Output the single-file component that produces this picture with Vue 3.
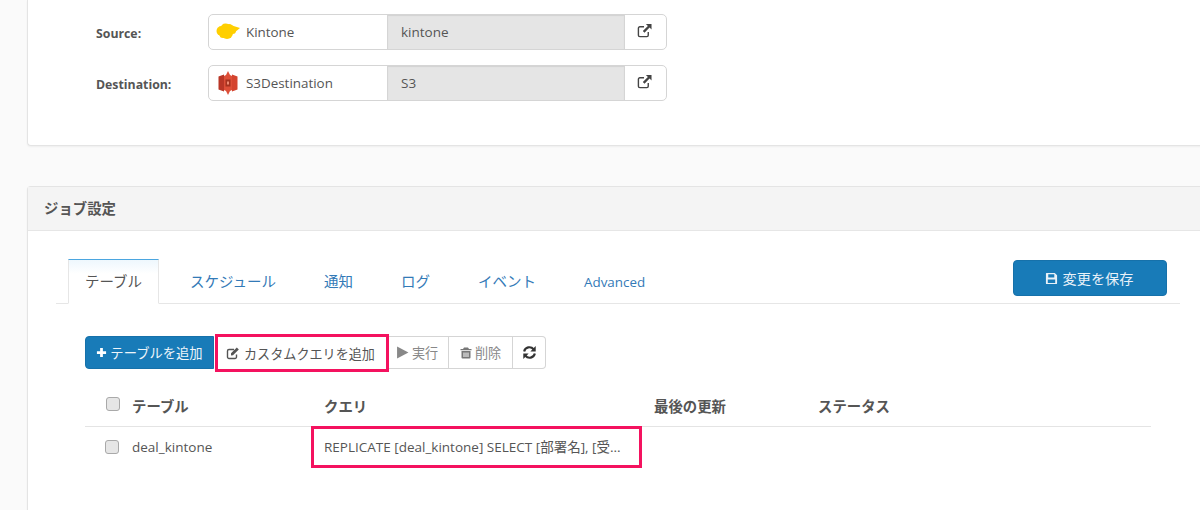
<script setup>
const connections = [
  { label: 'Source:', name: 'Kintone', type: 'kintone', icon: 'cloud' },
  { label: 'Destination:', name: 'S3Destination', type: 'S3', icon: 's3' }
]
const tabs = ['テーブル', 'スケジュール', '通知', 'ログ', 'イベント', 'Advanced']
</script>

<template>
  <div class="page">
    <section class="card card-top">
      <div v-for="c in connections" :key="c.label" class="conn-row">
        <div class="conn-label">{{ c.label }}</div>
        <div class="group">
          <div class="cell-name">
            <svg v-if="c.icon === 'cloud'" class="logo" viewBox="0 0 24 24">
              <g fill="#ffcf00">
                <circle cx="5.500" cy="11" r="5"/>
                <circle cx="9.500" cy="8.500" r="5"/>
                <circle cx="13" cy="8.500" r="4.500"/>
                <circle cx="11" cy="13" r="6"/>
                <circle cx="7" cy="14.500" r="3.500"/>
                <circle cx="16.500" cy="10.500" r="3.500"/>
                <path d="M16 5.500 24 8 18 13z"/>
              </g>
            </svg>
            <svg v-else class="logo" viewBox="0 0 24 24">
              <path fill="#b93626" d="M2.500 5.500 8 3.500v17l-5.500-2z"/>
              <path fill="#d4442f" d="M21.500 5.500 16 3.500v17l5.500-2z"/>
              <path fill="#dd4f38" d="M8 5 10 4 12 0l2 4 2 1v14l-2 1-2 4-2-4-2-1z"/>
              <path fill="#a5321f" d="M9.500 8.500h5v7h-5z"/>
              <path fill="#ee8a73" d="M11 10.500h2v3h-2z"/>
            </svg>
            <span class="name-text">{{ c.name }}</span>
          </div>
          <div class="cell-type">{{ c.type }}</div>
          <div class="cell-link">
            <svg viewBox="0 0 16 16" class="ext">
              <path fill="none" stroke="#444" stroke-width="1.500" d="M12 9.500V13a1.500 1.500 0 0 1-1.500 1.500H3A1.500 1.500 0 0 1 1.500 13V5.500A1.500 1.500 0 0 1 3 4h4.500"/>
              <path fill="#444" d="M9.500 1H15.500V7L13.400 4.900 8 10.300 6.200 8.500 11.600 3.100z"/>
            </svg>
          </div>
        </div>
      </div>
    </section>

    <section class="card card-job">
      <header class="card-head">ジョブ設定</header>
      <div class="card-body">
        <div class="tab-bar">
          <div class="tabs">
            <div v-for="(t, i) in tabs" :key="t" class="tab" :class="{ active: i === 0, latin: t === 'Advanced' }">{{ t }}</div>
          </div>
          <button class="btn-save">
            <svg viewBox="0 0 14 14" class="ic13">
              <path fill="#e8f1f8" fill-rule="evenodd" d="M1.500 1h9L13 3.500V12a1 1 0 0 1-1 1H2a1 1 0 0 1-1-1V1.500zM3.500 2.500v3.500h6.500V2.500zM3 8v3.800h8V8z"/>
            </svg>
            変更を保存
          </button>
        </div>

        <div class="toolbar">
          <button class="tb tb-primary">
            <svg viewBox="0 0 12 12" class="ic11"><path fill="#fff" d="M4.500 1h3v3.500H11v3H7.500V11h-3V7.500H1v-3h3.500z"/></svg>
            テーブルを追加
          </button>
          <button class="tb tb-custom">
            <svg viewBox="0 0 14 14" class="ic14">
              <path fill="none" stroke="#555" stroke-width="1.400" d="M10.500 8.500V11a1.500 1.500 0 0 1-1.500 1.500H3A1.500 1.500 0 0 1 1.500 11V5A1.500 1.500 0 0 1 3 3.500h5"/>
              <path fill="#555" d="M5 7.200 10.800 1.500 12.800 3.500 7 9.300 5 9.500z"/>
            </svg>
            カスタムクエリを追加
          </button>
          <button class="tb tb-muted tb-run">
            <svg viewBox="0 0 12 12" class="ic13"><path fill="#888" d="M1 0.500 11.500 6 1 11.500z"/></svg>
            実行
          </button>
          <button class="tb tb-muted tb-del">
            <svg viewBox="0 0 12 12" class="ic12"><path fill="#777" fill-rule="evenodd" d="M4 0.500h4L9 2h2.500v1.200H.5V2H3zM1.500 4h9v6.500a1 1 0 0 1-1 1h-7a1 1 0 0 1-1-1zM3.500 5.500v4.500h1V5.500zM5.500 5.500v4.500h1V5.500zM7.500 5.500v4.500h1V5.500z"/></svg>
            削除
          </button>
          <button class="tb tb-refresh">
            <svg viewBox="0 0 14 14" class="ic14">
              <path fill="none" stroke="#333" stroke-width="2" d="M2 6a5 5 0 0 1 8.800-2M12 8a5 5 0 0 1-8.800 2"/>
              <path fill="#333" d="M12.800 1v5h-5zM1.200 13V8h5z"/>
            </svg>
          </button>
        </div>

        <div class="table">
          <div class="tr th">
            <div class="col-check"><span class="checkbox"></span></div>
            <div class="col-name">テーブル</div>
            <div class="col-query">クエリ</div>
            <div class="col-updated">最後の更新</div>
            <div class="col-status">ステータス</div>
          </div>
          <div class="tr td">
            <div class="col-check"><span class="checkbox"></span></div>
            <div class="col-name">deal_kintone</div>
            <div class="col-query"><span class="query-box">REPLICATE [deal_kintone] SELECT [部署名], [受...</span></div>
          </div>
        </div>
      </div>
    </section>
  </div>
</template>

<style>
html, body { margin: 0; background: #fafafa; }
</style>

<style scoped>
.page {
  width: 1200px;
  height: 510px;
  overflow: hidden;
  background: #fafafa;
  padding-left: 27px;
  box-sizing: border-box;
  font-family: "Open Sans", "Noto Sans CJK JP", sans-serif;
  font-size: 14px;
  color: #555;
}
.card {
  width: 1200px;
  background: #fff;
  border: 1px solid #e4e4e4;
  border-right: none;
  border-radius: 4px 0 0 4px;
  box-shadow: 0 1px 2px rgba(0,0,0,.05);
  box-sizing: border-box;
}
.card-top {
  height: 146px;
  border-top: none;
  padding: 14px 0 0 68px;
  border-radius: 0 0 0 4px;
}
.conn-row {
  display: flex;
  align-items: center;
  height: 36px;
  margin-bottom: 15px;
}
.conn-label {
  width: 112px;
  font-size: 12.300px;
  font-weight: 700;
  color: #555;
  padding-top: 2px;
}
.group {
  display: flex;
  width: 459px;
  height: 36px;
  box-sizing: border-box;
  border: 1px solid #d5d5d5;
  border-radius: 5px;
  overflow: hidden;
  background: #fff;
}
.cell-name {
  width: 178px;
  display: flex;
  align-items: center;
  padding-left: 7px;
  box-sizing: border-box;
}
.name-text { font-size: 13.400px; padding-bottom: 1px; }
.logo { width: 24px; height: 24px; margin-right: 6px; flex: none; }
.cell-type {
  width: 238px;
  background: #e5e5e5;
  border-left: 1px solid #d5d5d5;
  border-right: 1px solid #d5d5d5;
  box-shadow: inset 0 1px 1px rgba(0,0,0,.08);
  box-sizing: border-box;
  padding-left: 13px;
  font-size: 13.500px;
  line-height: 35px;
}
.cell-link {
  flex: 1;
  display: flex;
  align-items: center;
  justify-content: center;
  padding-right: 2px;
}
.ext { width: 15px; height: 15px; margin-top: -3px; }

.card-job {
  margin-top: 40px;
  height: 400px;
}
.card-head {
  height: 43px;
  background: #f4f4f4;
  border-bottom: 1px solid #e6e6e6;
  padding-left: 16px;
  line-height: 43px;
  font-size: 14.400px;
  font-weight: 700;
  color: #555;
}
.card-body {
  padding: 28px 0 0 28px;
}
.tab-bar {
  width: 1124px;
  box-sizing: border-box;
  height: 45px;
  border-bottom: 1px solid #e6e6e6;
  display: flex;
  justify-content: space-between;
  padding-left: 12px;
}
.tabs { display: flex; height: 45px; }
.tab {
  padding: 0 24px;
  line-height: 45px;
  color: #337ab7;
  font-size: 14.500px;
  white-space: nowrap;
}
.tab.latin { font-size: 13.400px; line-height: 46px; }
.tab.active {
  width: 91px;
  padding: 0;
  margin-right: 7px;
  line-height: 44px;
  text-align: center;
  box-sizing: border-box;
  color: #555;
  background: linear-gradient(#eef7fd, #fff 14px);
  border: 1px solid #e6e6e6;
  border-top: 1px solid #4ba6e0;
  border-bottom: 1px solid #fff;
}
.btn-save {
  width: 154px;
  height: 36px;
  margin: 1px 13px 0 0;
  background: #187bb8;
  border: 1px solid #1671aa;
  border-radius: 4px;
  color: #e8f1f8;
  font: inherit;
  font-size: 14.200px;
  display: flex;
  align-items: center;
  justify-content: center;
  gap: 5px;
  padding: 0 2px 0 0;
}
.toolbar {
  display: flex;
  margin: 32px 0 0 29px;
  height: 33px;
}
.tb {
  height: 33px;
  font: inherit;
  font-size: 13.100px;
  display: flex;
  align-items: center;
  gap: 3px;
  padding: 0;
  box-sizing: border-box;
  justify-content: center;
  background: #fff;
  color: #888;
  border: 1px solid #d5d5d5;
  border-left: none;
}
.tb-primary {
  width: 129px;
  font-size: 13.300px;
  background: #187bb8;
  color: #eef5fa;
  border: 1px solid #1671aa;
  border-radius: 4px 0 0 4px;
}
.tb-custom {
  width: 174px;
  margin-left: 1px;
  padding-right: 3px;
  gap: 4px;
  color: #555;
  border: 3px solid #f4125f;
  height: 38px;
  margin-top: -2px;
  position: relative;
  z-index: 1;
}
.tb-run { width: 61px; margin-left: -1px; padding-right: 2px; }
.tb-del { width: 64px; }
.tb-refresh { width: 33px; border-radius: 0 4px 4px 0; }
.ic13 { width: 13px; height: 13px; flex: none; }
.ic12 { width: 12px; height: 12px; flex: none; }
.ic11 { width: 11px; height: 11px; flex: none; }
.ic14 { width: 14px; height: 14px; flex: none; }
.tb-refresh .ic14 { width: 15px; height: 15px; }

.table {
  width: 1066px;
  margin: 17px 0 0 29px;
}
.tr { display: flex; align-items: center; }
.th {
  height: 41px;
  box-sizing: border-box;
  padding-bottom: 2px;
  border-bottom: 1px solid #e4e4e4;
  font-weight: 700;
  font-size: 14.400px;
  color: #555;
}
.th .checkbox { margin-top: -2px; }
.td { height: 40px; font-size: 13.500px; }
.col-check { width: 47px; padding-left: 21px; box-sizing: border-box; display: flex; }
.col-name { width: 192px; }
.col-query { width: 330px; }
.col-updated { width: 164px; }
.col-status { width: 200px; }
.td .col-check { padding-left: 20px; }
.checkbox {
  width: 14px;
  height: 14px;
  box-sizing: border-box;
  background: #e6e6e6;
  border: 1px solid #a9a9a9;
  border-radius: 3px;
  display: block;
}
.query-box {
  display: block;
  width: 331px;
  height: 42px;
  margin-left: -13px;
  padding-left: 10px;
  box-sizing: border-box;
  border: 3px solid #f4125f;
  line-height: 36px;
  white-space: nowrap;
  background: #fff;
}
</style>
